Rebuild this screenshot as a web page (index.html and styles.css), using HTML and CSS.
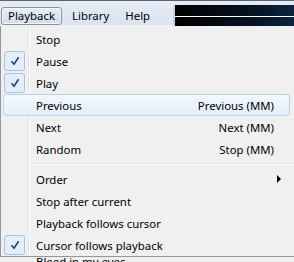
FILE: index.html
```html
<!DOCTYPE html>
<html lang="en">
<head>
  <meta charset="UTF-8" />
  <title>Playback menu</title>
  <link rel="stylesheet" href="styles.css">
</head>
<body>
  <div class="window">
    <!-- Menüleiste -->
    <div class="menubar">
      <span class="menubar-item active">Playback</span>
      <span class="menubar-item">Library</span>
      <span class="menubar-item">Help</span>
      <div class="visual">
        <div class="visual-line"></div>
      </div>
    </div>

    <!-- Aufgeklapptes Menü -->
    <div class="menu">
      <div class="item"><span class="gutter"></span><span class="text">Stop</span></div>
      <div class="item"><span class="gutter"><span class="check"><svg width="10" height="10" viewBox="0 0 10 10"><path d="M1.5 5.2 L4 8.2 L8.6 1.2" /></svg></span></span><span class="text">Pause</span></div>
      <div class="item"><span class="gutter"><span class="check"><svg width="10" height="10" viewBox="0 0 10 10"><path d="M1.5 5.2 L4 8.2 L8.6 1.2" /></svg></span></span><span class="text">Play</span></div>
      <div class="item hover"><span class="gutter"></span><span class="text">Previous</span><span class="key">Previous (MM)</span></div>
      <div class="item"><span class="gutter"></span><span class="text">Next</span><span class="key">Next (MM)</span></div>
      <div class="item"><span class="gutter"></span><span class="text">Random</span><span class="key">Stop (MM)</span></div>
      <div class="separator"></div>
      <div class="item"><span class="gutter"></span><span class="text">Order</span><span class="arrow"></span></div>
      <div class="item"><span class="gutter"></span><span class="text">Stop after current</span></div>
      <div class="item"><span class="gutter"></span><span class="text">Playback follows cursor</span></div>
      <div class="item"><span class="gutter"><span class="check"><svg width="10" height="10" viewBox="0 0 10 10"><path d="M1.5 5.2 L4 8.2 L8.6 1.2" /></svg></span></span><span class="text">Cursor follows playback</span></div>
    </div>
    <div class="below">Bleed in my eyes</div>
  </div>
</body>
</html>
```

FILE: styles.css
```css
body {
  margin: 0;
  font-family: "Noto Sans", "Open Sans", sans-serif;
  font-size: 11.4px;
  color: #000000;
  background-color: #f0f0f0;
}
.window {
  width: 294px;
  height: 262px;
  overflow: hidden;
  position: relative;
}
.menubar {
  height: 25px;
  border-top: 1px solid #5c6670;
  background: linear-gradient(#e6ecf5, #d9e3f0);
  display: flex;
  align-items: flex-start;
  padding-left: 1px;
  box-sizing: border-box;
}
.menubar-item {
  margin-top: 6px;
  height: 18px;
  line-height: 16px;
  padding: 0 7px;
  border: 1px solid transparent;
  box-sizing: border-box;
}
.menubar-item.active {
  padding: 0 6px;
  margin-right: 2px;
  border-color: #8596aa;
  border-radius: 3px;
  background: linear-gradient(#e9eef5, #d3dce8);
  box-shadow: inset 0 0 0 1px #f4f7fb;
}
.visual {
  margin-left: auto;
  margin-top: 4px;
  width: 119px;
  height: 21px;
  border-left: 2px solid #c9d2de;
  background: linear-gradient(90deg, #000000, #061426 70%, #0c2440);
  display: flex;
  align-items: center;
}
.visual-line {
  height: 1px;
  width: 100%;
  background: #ffffff;
  margin-top: 1px;
}
.menu {
  margin-top: 1px;
  border-left: 1px solid #979797;
  border-bottom: 1px solid #979797;
  padding: 2px 0 0 2px;
  background: linear-gradient(90deg, #f0f0f0 27px, #e2e3e3 27px, #e2e3e3 28px, #ffffff 28px, #ffffff 29px, #f0f0f0 29px);
}
.item {
  height: 22px;
  display: flex;
  align-items: center;
  margin-right: 4px;
  border: 1px solid transparent;
  border-radius: 3px;
  box-sizing: border-box;
}
.item.hover {
  border-color: #b8d4ee;
  background: linear-gradient(#f3f8fd, #e3eefa);
}
.gutter {
  width: 32px;
  height: 100%;
  display: flex;
  align-items: center;
}
.check {
  width: 21px;
  height: 20px;
  border: 1px solid #a8c4e0;
  border-radius: 3px;
  background: #e4eefa;
  display: flex;
  align-items: center;
  justify-content: center;
  box-sizing: border-box;
}
.check path {
  fill: none;
  stroke: #1f3f91;
  stroke-width: 1.6;
}
.text {
  flex: 1;
}
.key {
  padding-right: 15px;
}
.arrow {
  width: 0;
  height: 0;
  border-top: 4px solid transparent;
  border-bottom: 4px solid transparent;
  border-left: 4px solid #000000;
  margin-right: 8px;
}
.separator {
  height: 8px;
  margin-left: 30px;
  display: flex;
  align-items: center;
}
.separator::before {
  content: "";
  display: block;
  width: 100%;
  height: 1px;
  background: #e0e0e0;
  border-bottom: 1px solid #ffffff;
}
.below {
  line-height: 12px;
  padding-left: 36px;
  margin-top: -1px;
}
```
